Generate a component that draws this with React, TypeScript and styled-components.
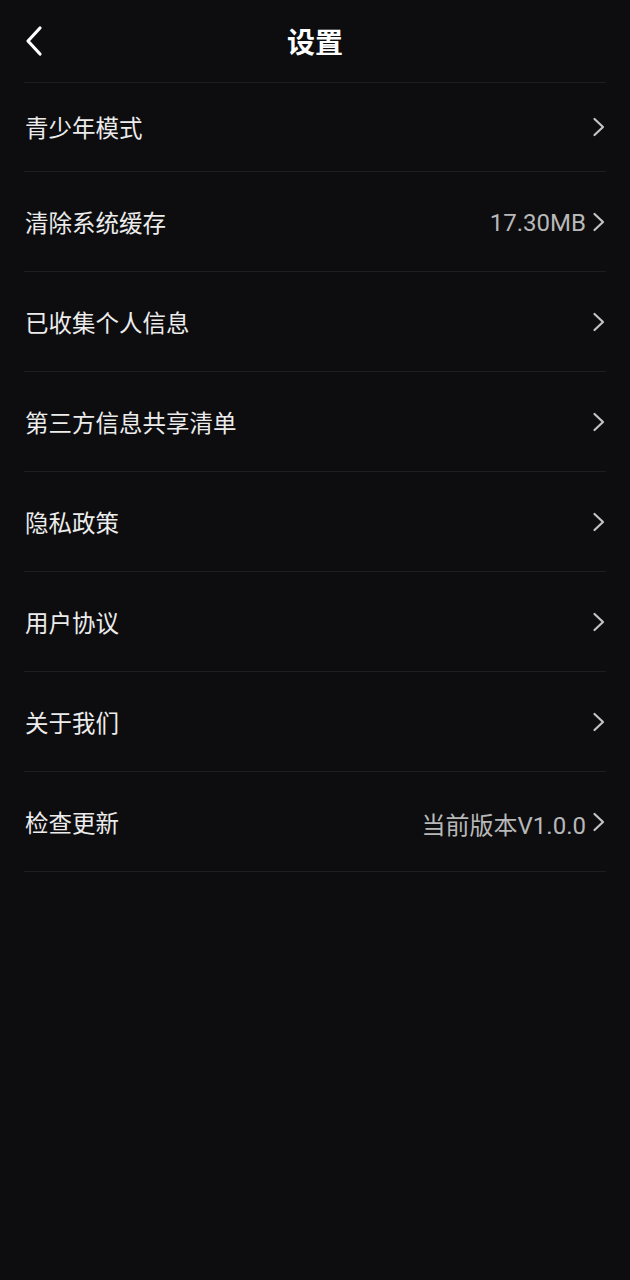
import React from "react";
import styled, { createGlobalStyle } from "styled-components";

const Global = createGlobalStyle`
  html, body { margin: 0; padding: 0; background: #0d0d0f; }
  body { font-family: "Noto Sans CJK SC", "Noto Sans", Roboto, sans-serif; }
`;

const Page = styled.div`
  width: 630px;
  min-height: 1280px;
  background: #0d0d0f;
  color: #ececec;
`;

const Header = styled.header`
  height: 82px;
  display: grid;
  grid-template-columns: 80px 1fr 80px;
  align-items: center;
`;

const BackButton = styled.button`
  background: none;
  border: 0;
  padding: 0 0 0 24px;
  height: 82px;
  display: flex;
  align-items: center;
  cursor: pointer;
`;

const Title = styled.h1`
  margin: 0;
  text-align: center;
  font-size: 28px;
  font-weight: 700;
  color: #ffffff;
  letter-spacing: 0;
`;

const List = styled.ul`
  list-style: none;
  margin: 0 24px;
  padding: 0;
  border-top: 1px solid #1e1e21;
`;

const Row = styled.li<{ $h: number }>`
  height: ${(p) => p.$h}px;
  display: flex;
  align-items: center;
  justify-content: space-between;
  border-bottom: 1px solid #1e1e21;
  box-sizing: border-box;
`;

const Label = styled.span`
  font-size: 23.5px;
  color: #ececec;
  padding-left: 1px;
`;

const Right = styled.span`
  display: flex;
  align-items: center;
  gap: 6px;
`;

const Value = styled.span`
  font-family: Roboto, "Noto Sans CJK SC", sans-serif;
  font-size: 24px;
  color: #b8b8b8;
  padding-top: 3px;
`;

const Chevron = () => (
  <svg width="14" height="20" viewBox="0 0 14 20" fill="none">
    <path d="M2.5 2 L11 10 L2.5 18" stroke="#c4c4c4" strokeWidth="2.2" strokeLinecap="round" strokeLinejoin="round" />
  </svg>
);

const items: { label: string; value?: string }[] = [
  { label: "青少年模式" },
  { label: "清除系统缓存", value: "17.30MB" },
  { label: "已收集个人信息" },
  { label: "第三方信息共享清单" },
  { label: "隐私政策" },
  { label: "用户协议" },
  { label: "关于我们" },
  { label: "检查更新", value: "当前版本V1.0.0" },
];

export default function App() {
  return (
    <Page>
      <Global />
      <Header>
        <BackButton aria-label="返回">
          <svg width="20" height="32" viewBox="0 0 20 32" fill="none">
            <path d="M16 3 L4 16 L16 29" stroke="#ffffff" strokeWidth="3.2" strokeLinecap="round" strokeLinejoin="round" />
          </svg>
        </BackButton>
        <Title>设置</Title>
        <div />
      </Header>
      <List>
        {items.map((it, i) => (
          <Row key={it.label} $h={i === 0 ? 89 : 100}>
            <Label>{it.label}</Label>
            <Right>
              {it.value && <Value>{it.value}</Value>}
              <Chevron />
            </Right>
          </Row>
        ))}
      </List>
    </Page>
  );
}
